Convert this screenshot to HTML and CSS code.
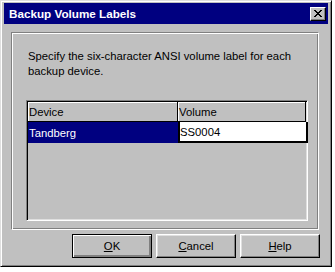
FILE: index.html
```html
<!DOCTYPE html>
<html lang="en">
<head>
    <meta charset="UTF-8">
    <title>Backup Volume Labels</title>
    <link rel="stylesheet" href="styles.css">
</head>
<body>
    <div class="window">
        <div class="titlebar">
            <span class="title">Backup Volume Labels</span>
            <span class="close">
                <svg width="8" height="7" viewBox="0 0 8 7">
                    <path d="M0 0h2v1h-2zM6 0h2v1h-2zM1 1h2v1h-2zM5 1h2v1h-2zM2 2h4v1h-4zM3 3h2v1h-2zM2 4h4v1h-4zM1 5h2v1h-2zM5 5h2v1h-2zM0 6h2v1h-2zM6 6h2v1h-2z" fill="#000"/>
                </svg>
            </span>
        </div>

        <div class="group">
            <p class="prompt">Specify the six-character ANSI volume label for each backup device.</p>
            <div class="list">
                <div class="head">Device</div>
                <div class="head">Volume</div>
                <div class="cell selected">Tandberg</div>
                <div class="cell editing">SS0004</div>
            </div>
        </div>

        <div class="buttons">
            <button class="default"><u>O</u>K</button>
            <button><u>C</u>ancel</button>
            <button><u>H</u>elp</button>
        </div>
    </div>
</body>
</html>
```

FILE: styles.css
```css
body {
    margin: 0;
    background-color: #fff;
    font-family: "Liberation Sans", Arial, sans-serif;
    font-size: 11.3px;
    color: #000;
}
.window {
    width: 332px;
    height: 267px;
    box-sizing: border-box;
    display: flex;
    flex-direction: column;
    padding: 2px 3px 3px 3px;
    background-color: #c0c0c0;
    border: 1px solid;
    border-color: #dfdfdf #000 #000 #dfdfdf;
    box-shadow: inset 1px 1px #fff, inset -1px -1px #808080;
}
.titlebar {
    height: 21px;
    display: flex;
    align-items: center;
    justify-content: space-between;
    padding: 0 2px 0 5px;
    background-color: #000080;
    color: #fff;
}
.title {
    font-weight: bold;
    font-size: 11.7px;
}
.close {
    width: 16px;
    height: 14px;
    box-sizing: border-box;
    display: flex;
    align-items: center;
    justify-content: center;
    background-color: #c0c0c0;
    border: 1px solid;
    border-color: #fff #000 #000 #fff;
    box-shadow: inset -1px -1px #808080;
}
.group {
    width: 308px;
    height: 198px;
    box-sizing: border-box;
    margin: 8px 0 0 7px;
    padding: 16px 10px 0 14px;
    border: 1px solid;
    border-color: #808080 #fff #fff #808080;
    box-shadow: inset 1px 1px #fff, inset -1px -1px #808080;
}
.prompt {
    max-width: 270px;
    margin: 0 0 21px 2px;
    line-height: 15px;
}
.list {
    height: 121px;
    box-sizing: border-box;
    display: grid;
    grid-template-columns: 150px 1fr;
    grid-template-rows: 20px 21px;
    align-content: start;
    border: 1px solid;
    border-color: #808080 #fff #fff #808080;
    box-shadow: inset 1px 1px #000, inset -1px -1px #dfdfdf;
    padding: 1px;
}
.head {
    display: flex;
    align-items: center;
    padding-left: 1px;
    border-right: 1px solid #000;
    border-bottom: 1px solid #000;
    box-shadow: inset 1px 1px #fff;
}
.cell {
    display: flex;
    align-items: center;
    padding-left: 1px;
}
.selected {
    background-color: #000080;
    color: #fff;
}
.editing {
    background-color: #fff;
    border: 2px solid #000;
    border-top: 0;
    margin-right: -2px;
    padding-left: 0;
}
.buttons {
    display: flex;
    justify-content: flex-end;
    gap: 4px;
    margin: 4px 8px 0 0;
}
button {
    width: 80px;
    height: 24px;
    padding: 0;
    font-family: inherit;
    font-size: 11.3px;
    color: #000;
    background-color: #c0c0c0;
    border: 1px solid;
    border-color: #fff #000 #000 #fff;
    box-shadow: inset -1px -1px #808080, inset 1px 1px #dfdfdf;
}
button.default {
    border: 1px solid #000;
    box-shadow: inset 1px 1px #fff, inset -1px -1px #808080, inset -2px -2px #808080;
}
u {
    text-decoration: underline;
}
```
